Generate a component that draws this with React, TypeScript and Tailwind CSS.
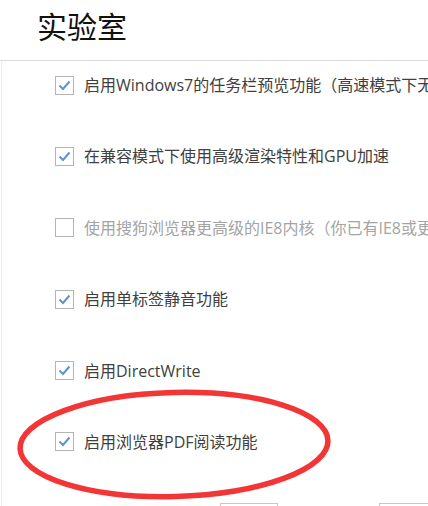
import React from "react";

const items = [
  { label: "启用Windows7的任务栏预览功能（高速模式下无法使用）", checked: true, disabled: false },
  { label: "在兼容模式下使用高级渲染特性和GPU加速", checked: true, disabled: false },
  { label: "使用搜狗浏览器更高级的IE8内核（你已有IE8或更高版本）", checked: false, disabled: true },
  { label: "启用单标签静音功能", checked: true, disabled: false },
  { label: "启用DirectWrite", checked: true, disabled: false },
  { label: "启用浏览器PDF阅读功能", checked: true, disabled: false },
];

function Box({ checked }: { checked: boolean }) {
  return (
    <div className="w-[19px] h-[19px] shrink-0 border border-[#b4b4b4] bg-white flex items-center justify-center">
      {checked && (
        <svg width="13" height="11" viewBox="0 0 13 11">
          <path d="M1.5 5.5 L5 9 L11.5 1.5" fill="none" stroke="#5f92d4" strokeWidth="2" />
        </svg>
      )}
    </div>
  );
}

export default function App() {
  return (
    <div
      className="relative w-[428px] h-[506px] overflow-hidden bg-white"
      style={{ fontFamily: '"Noto Sans CJK SC", sans-serif' }}
    >
      <div className="h-[61px] border-b border-[#dcdcdc] pl-[37px] pt-[3px]">
        <div className="text-[30px] leading-[44px] text-[#111]">实验室</div>
      </div>
      <div className="h-[445px] ml-[1px] border-l border-[#ececec] pt-[14px] pl-[53px] flex flex-col gap-[51.4px]">
        {items.map((it, i) => (
          <div key={i} className="h-[20px] flex items-center gap-[10px] whitespace-nowrap">
            <Box checked={it.checked} />
            <span
              className={"text-[16px] leading-[20px] " + (it.disabled ? "text-[#a4a4a4]" : "text-[#404040]")}
              style={{ fontFamily: '"Open Sans", "Noto Sans CJK SC", sans-serif' }}
            >
              {it.label}
            </span>
          </div>
        ))}
      </div>
      <div className="absolute left-[220px] top-[503px] w-[58px] h-[20px] border border-[#c8c8c8] bg-white" />
      <div className="absolute left-[379px] top-[503px] w-[70px] h-[20px] border border-[#c8c8c8] bg-white" />
      <svg className="absolute left-0 top-0 pointer-events-none" width="428" height="506" viewBox="0 0 428 506">
        <ellipse cx="174" cy="444.5" rx="154" ry="52" fill="none" stroke="#f23535" strokeWidth="5.5" transform="rotate(-1.5 174 444.5)" />
      </svg>
    </div>
  );
}
